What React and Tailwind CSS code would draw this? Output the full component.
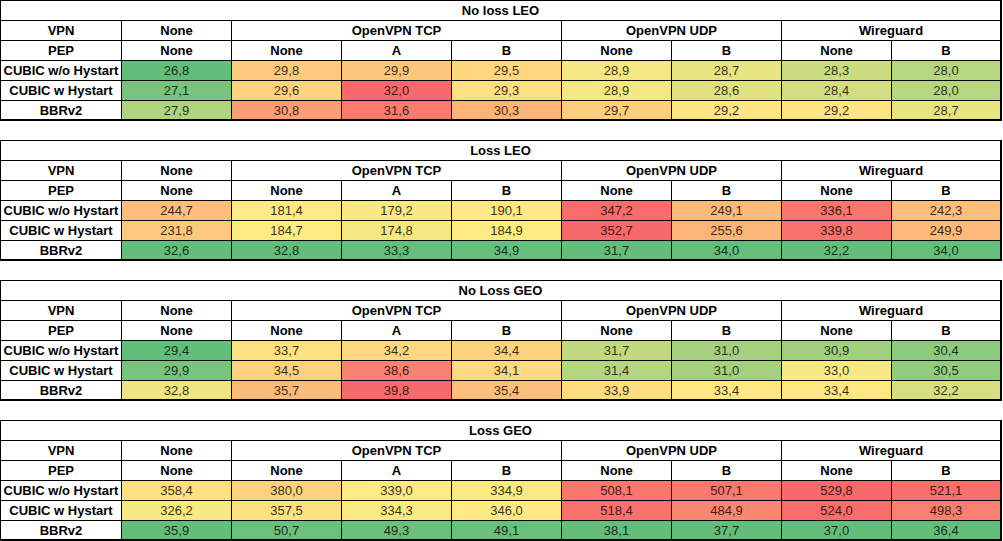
import React from "react";
import clsx from "clsx";

const tables = [
  {
    title: "No loss LEO",
    rows: [
      [26.8, 29.8, 29.9, 29.5, 28.9, 28.7, 28.3, 28.0],
      [27.1, 29.6, 32.0, 29.3, 28.9, 28.6, 28.4, 28.0],
      [27.9, 30.8, 31.6, 30.3, 29.7, 29.2, 29.2, 28.7],
    ],
  },
  {
    title: "Loss LEO",
    rows: [
      [244.7, 181.4, 179.2, 190.1, 347.2, 249.1, 336.1, 242.3],
      [231.8, 184.7, 174.8, 184.9, 352.7, 255.6, 339.8, 249.9],
      [32.6, 32.8, 33.3, 34.9, 31.7, 34.0, 32.2, 34.0],
    ],
  },
  {
    title: "No Loss GEO",
    rows: [
      [29.4, 33.7, 34.2, 34.4, 31.7, 31.0, 30.9, 30.4],
      [29.9, 34.5, 38.6, 34.1, 31.4, 31.0, 33.0, 30.5],
      [32.8, 35.7, 39.8, 35.4, 33.9, 33.4, 33.4, 32.2],
    ],
  },
  {
    title: "Loss GEO",
    rows: [
      [358.4, 380.0, 339.0, 334.9, 508.1, 507.1, 529.8, 521.1],
      [326.2, 357.5, 334.3, 346.0, 518.4, 484.9, 524.0, 498.3],
      [35.9, 50.7, 49.3, 49.1, 38.1, 37.7, 37.0, 36.4],
    ],
  },
];

const labels = ["CUBIC w/o Hystart", "CUBIC w Hystart", "BBRv2"];
const pep = ["None", "None", "A", "B", "None", "B", "None", "B"];

// excel style 3-colour scale: min green, median yellow, max red
const GREEN = [99, 190, 123];
const YELLOW = [255, 235, 132];
const RED = [248, 105, 107];

const mix = (a, b, t) =>
  `rgb(${a.map((v, i) => Math.round(v + (b[i] - v) * t)).join(",")})`;

const makeScale = (rows) => {
  const all = rows.flat().sort((a, b) => a - b);
  const min = all[0];
  const max = all[all.length - 1];
  const h = all.length / 2;
  const mid = (all[h - 1] + all[h]) / 2;
  return (v) =>
    v <= mid
      ? mix(GREEN, YELLOW, (v - min) / (mid - min))
      : mix(YELLOW, RED, (v - mid) / (max - mid));
};

const fmt = (v) => v.toFixed(1).replace(".", ",");

const Cell = ({ children, span, right, bottom, bold, bg }) => (
  <div
    className={clsx(
      "flex h-5 items-center justify-center border-black pt-px",
      right ? "border-r-2" : "border-r",
      bottom ? "border-b-2" : "border-b",
      span,
      bold ? "font-bold text-black" : "text-black/80"
    )}
    style={bg ? { backgroundColor: bg } : undefined}
  >
    {children}
  </div>
);

const ResultTable = ({ title, rows }) => {
  const color = makeScale(rows);
  return (
    <div className="grid w-fit grid-cols-[121px_repeat(8,110px)] border-t border-l border-black bg-white">
      <Cell span="col-span-9" right bold>
        {title}
      </Cell>

      <Cell bold>VPN</Cell>
      <Cell bold>None</Cell>
      <Cell span="col-span-3" bold>
        OpenVPN TCP
      </Cell>
      <Cell span="col-span-2" bold>
        OpenVPN UDP
      </Cell>
      <Cell span="col-span-2" right bold>
        Wireguard
      </Cell>

      <Cell bold>PEP</Cell>
      {pep.map((p, i) => (
        <Cell key={i} right={i === 7} bold>
          {p}
        </Cell>
      ))}

      {rows.map((row, r) => (
        <React.Fragment key={r}>
          <Cell bottom={r === 2} bold>
            {labels[r]}
          </Cell>
          {row.map((v, i) => (
            <Cell key={i} right={i === 7} bottom={r === 2} bg={color(v)}>
              {fmt(v)}
            </Cell>
          ))}
        </React.Fragment>
      ))}
    </div>
  );
};

export default function App() {
  return (
    <div className="flex h-[541px] w-[1003px] flex-col gap-[19px] bg-white font-['Liberation_Sans',Arial,sans-serif] text-[13px]">
      {tables.map((t) => (
        <ResultTable key={t.title} title={t.title} rows={t.rows} />
      ))}
    </div>
  );
}
